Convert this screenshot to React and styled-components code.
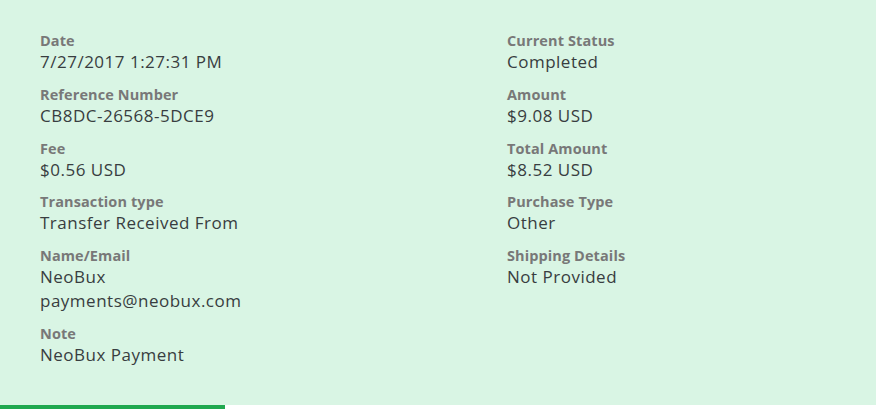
import React from 'react'
import styled, { createGlobalStyle } from 'styled-components'

const GlobalStyle = createGlobalStyle`
  body {
    margin: 0;
    background: #ffffff;
    font-family: "Open Sans", "Liberation Sans", sans-serif;
  }
`;

const Panel = styled.div`
  background: #d9f5e4;
  height: 405px;
  box-sizing: border-box;
  padding: 32px 0 0 40px;
  display: grid;
  grid-template-columns: 467px 1fr;
`;

const Column = styled.div`
  display: flex;
  flex-direction: column;
  gap: 11.75px;
`;

const Item = styled.div`
  display: flex;
  flex-direction: column;
`;

const Label = styled.div`
  font-size: 14.5px;
  line-height: 18px;
  font-weight: 700;
  letter-spacing: 0.1px;
  color: #787878;
`;

const Value = styled.div`
  font-size: 17px;
  line-height: 24px;
  letter-spacing: 0.5px;
  color: #383d40;
`;

const Footer = styled.div`
  height: 4px;
  background: #ffffff;
`;

const Progress = styled.div`
  height: 100%;
  background: #20a84f;
`;

const left = [
  { label: 'Date', values: ['7/27/2017 1:27:31 PM'] },
  { label: 'Reference Number', values: ['CB8DC-26568-5DCE9'] },
  { label: 'Fee', values: ['$0.56 USD'] },
  { label: 'Transaction type', values: ['Transfer Received From'] },
  { label: 'Name/Email', values: ['NeoBux', 'payments@neobux.com'] },
  { label: 'Note', values: ['NeoBux Payment'] },
];

const right = [
  { label: 'Current Status', values: ['Completed'] },
  { label: 'Amount', values: ['$9.08 USD'] },
  { label: 'Total Amount', values: ['$8.52 USD'] },
  { label: 'Purchase Type', values: ['Other'] },
  { label: 'Shipping Details', values: ['Not Provided'] },
];

const Details = ({ items }) => (
  <Column>
    {items.map(item => (
      <Item key={item.label}>
        <Label>{item.label}</Label>
        {item.values.map(v => <Value key={v}>{v}</Value>)}
      </Item>
    ))}
  </Column>
);

const App = () => (
  <>
    <GlobalStyle />
    <Panel>
      <Details items={left} />
      <Details items={right} />
    </Panel>
    <Footer>
      <Progress style={{ width: '225px' }} />
    </Footer>
  </>
);

export default App
